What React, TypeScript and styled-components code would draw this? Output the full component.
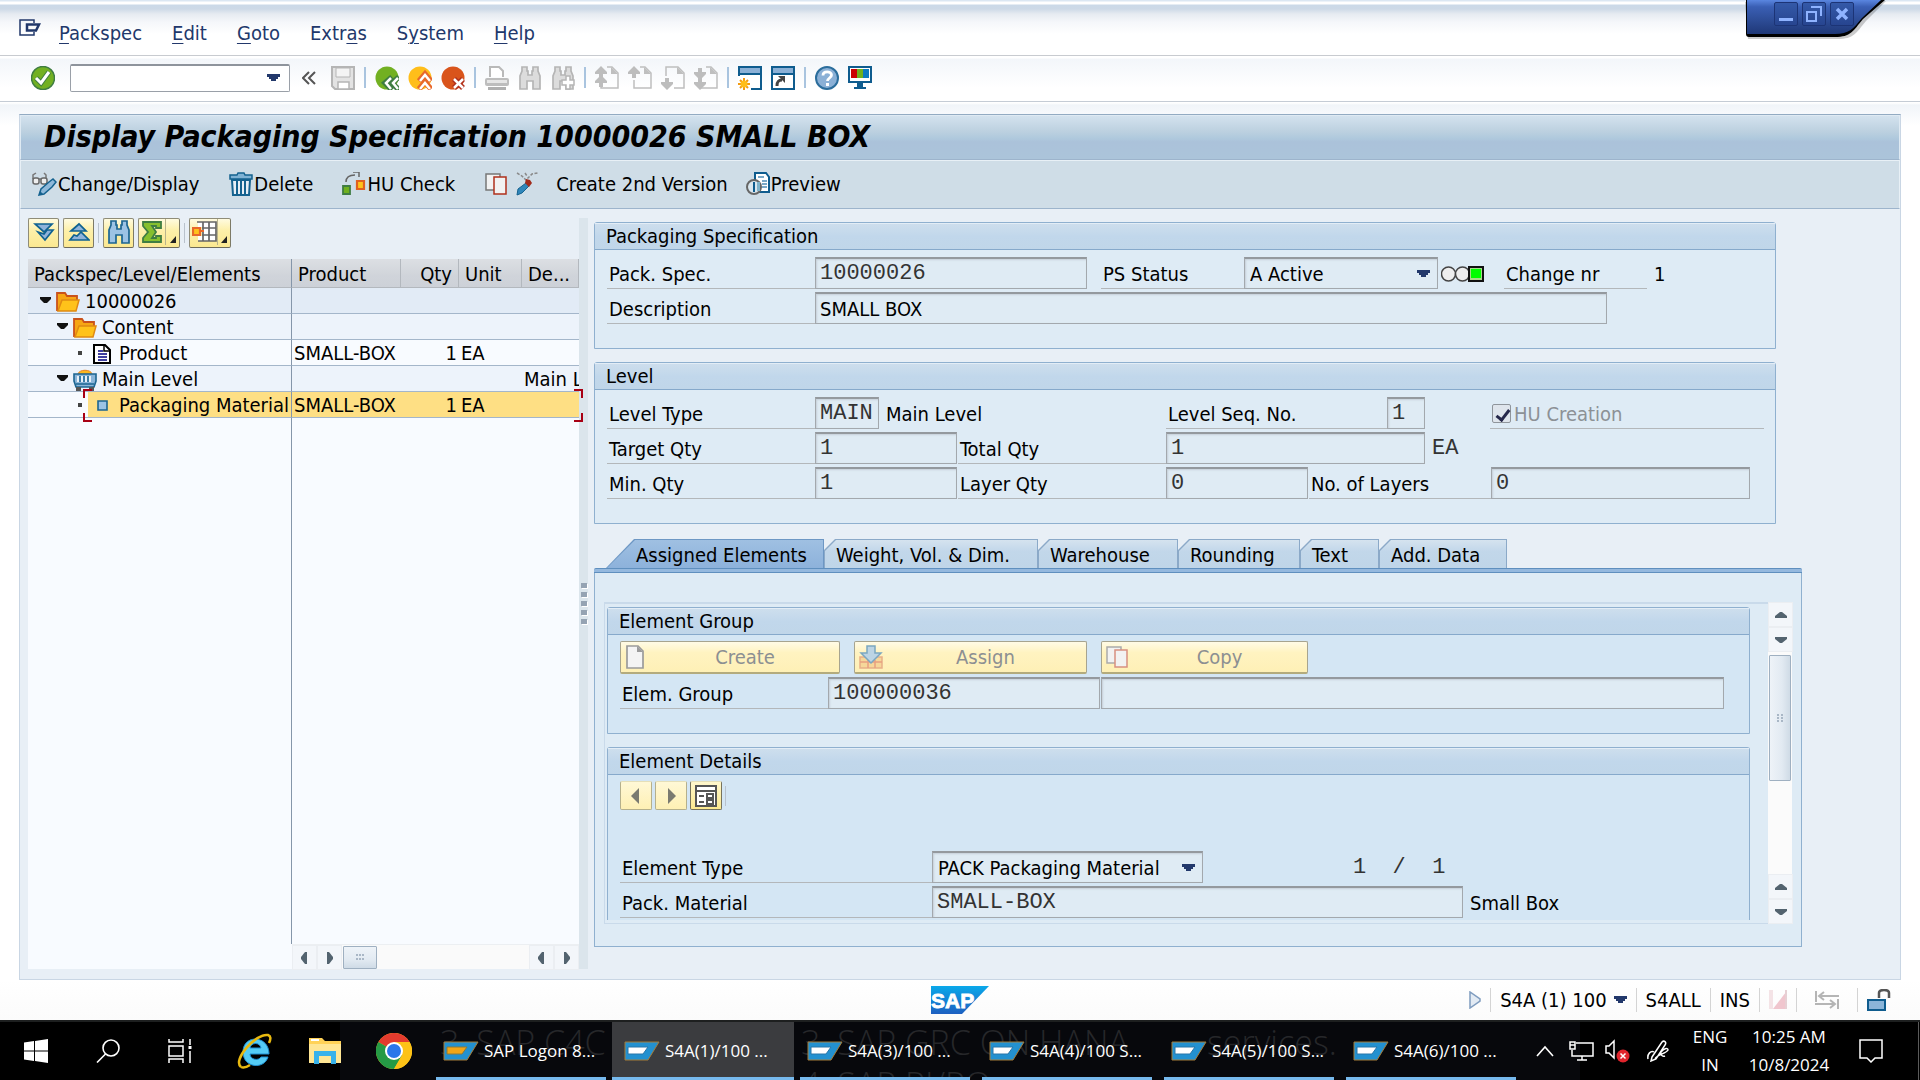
import React from 'react';
import styled, { createGlobalStyle, css } from 'styled-components';

const UI = `"DejaVu Sans Condensed", "DejaVu Sans", "Noto Sans", sans-serif`;
const MONO = `"Liberation Mono", monospace`;
const SEGOE = `"Open Sans", "Noto Sans", sans-serif`;

const GlobalStyle = createGlobalStyle`
  * { box-sizing: border-box; }
  body { margin: 0; background: #fff; font-family: ${UI}; font-size: 20px; line-height: 24px; color: #000; overflow: hidden; }
  button, input, select { font: inherit; color: inherit; margin: 0; padding: 0; border: 0; border-radius: 0; background: none; }
  svg { display: block; flex: none; }
  h1, h2 { margin: 0; font-weight: 400; font-size: inherit; }
`;

/* ---------- window ---------- */
const Window = styled.div`
  display: flex;
  flex-direction: column;
  min-height: 100vh;
  position: relative;
`;

const MenuBar = styled.nav`
  display: flex;
  align-items: center;
  height: 56px;
  padding: 10px 19px 0;
  border-bottom: 1px solid #c8cbd0;
  background: linear-gradient(#dbe7f3 0, #dbe7f3 1px, #fff 2px, #fff 4px, #cbd9e8 5px, #cdd9e7 9px, #e6ebf1 14px, #f5f7fa 22px, #fff 34px);
`;

const SystemMenu = styled.button`
  width: 22px;
  margin: 0 18px 10px 0;
`;

const MenuItem = styled.button`
  margin-right: 30px;
  color: #22386b;
  u { text-decoration-thickness: 1px; text-underline-offset: 3px; }
`;

const SystemBar = styled.div`
  display: flex;
  align-items: center;
  gap: 9px;
  height: 46px;
  padding: 0 31px 2px;
  border-bottom: 1px solid #c5ccd5;
  background: linear-gradient(#fff 2px, #f3f6fa 3px, #fff 32px);
`;

const Sep = styled.i`
  width: 2px;
  height: 21px;
  background: #a9c4df;
`;

const IconButton = styled.button`
  width: 24px;
  height: 26px;
  display: flex;
  align-items: center;
  justify-content: center;
`;

const HistoryButton = styled.button`
  width: 20px;
  height: 26px;
  display: flex;
  align-items: center;
`;

const Command = styled.div`
  display: flex;
  align-items: center;
  width: 220px;
  height: 28px;
  margin: 0 3px 0 6px;
  border: 1px solid #9aa0a8;
  border-top: 2px solid #8e949c;
  border-radius: 2px;
  background: #fff;
  padding-right: 9px;
  input { flex: 1; min-width: 0; height: 100%; outline: 0; padding-left: 6px; }
`;

const Canvas = styled.main`
  flex: 1;
  display: flex;
  flex-direction: column;
  padding: 12px 19px 0;
  background: linear-gradient(#fff 1px, #f1f5f9 3px, #fafbfd 16px, #fff 24px);
`;

const Frame = styled.section`
  flex: 1;
  display: flex;
  flex-direction: column;
  border: 1px solid #c9d6e4;
  border-top-color: #93abc2;
  background: #e8eff6;
`;

const TitleBar = styled.header`
  height: 45px;
  display: flex;
  align-items: center;
  padding: 0 0 2px 23px;
  border: 1px solid #dfeaf3;
  border-bottom: 1px solid #9db4cc;
  background: linear-gradient(#d3e2ee, #bdd1e0 35%, #afc9dd 52%, #abc2da 60%, #abc4da);
  h1 { font-size: 30px; line-height: 36px; font-weight: 700; font-style: italic; }
`;

const AppToolbar = styled.div`
  height: 49px;
  display: flex;
  align-items: center;
  padding: 0 0 2px 11px;
  border: 1px solid #e8f0f6;
  border-bottom: 1px solid #9db4cc;
  background: #cfdde7;
`;

const ToolButton = styled.button<{ $gap?: number }>`
  display: flex;
  align-items: center;
  gap: 1px;
  margin-right: ${(p) => p.$gap ?? 0}px;
  white-space: nowrap;
`;

const Workspace = styled.div`
  flex: 1;
  display: flex;
  padding: 9px 0 10px 8px;
`;

/* ---------- tree ---------- */
const TreePanel = styled.aside`
  width: 551px;
  flex: none;
  display: flex;
  flex-direction: column;
`;

const TreeTools = styled.div`
  display: flex;
  align-items: center;
  gap: 4px;
  height: 30px;
  margin-bottom: 11px;
`;

const goldFace = css`
  border: 1px solid #8f8c78;
  border-bottom-color: #6d6a58;
  border-right-color: #7d7a66;
  border-radius: 2px;
  background: linear-gradient(#fffbe0, #fdf0aa 40%, #fbe891);
`;

const GoldButton = styled.button<{ $wide?: boolean }>`
  ${goldFace}
  width: ${(p) => (p.$wide ? 42 : 31)}px;
  height: 30px;
  display: flex;
  align-items: center;
  justify-content: ${(p) => (p.$wide ? 'flex-start' : 'center')};
  padding: 0 0 2px ${(p) => (p.$wide ? 2 : 0)}px;
`;

const GoldCorner = styled.span`
  height: 26px;
  flex: 1;
  display: flex;
  align-items: flex-end;
  justify-content: center;
  padding-bottom: 2px;
  border-left: 1px solid #b9b48c;
`;

const ToolSep = styled.i`
  width: 1px;
  height: 20px;
  background: #b9c2cc;
`;

const TreeGrid = styled.div`
  flex: 1;
  display: flex;
  flex-direction: column;
  background: #f8fbff;
`;

const TreeTable = styled.table`
  width: 551px;
  table-layout: fixed;
  border-collapse: separate;
  border-spacing: 0;
  th {
    height: 29px;
    padding: 2px 6px 0;
    font-weight: 400;
    text-align: left;
    white-space: nowrap;
    border-right: 1px solid #b3b8be;
    border-bottom: 1px solid #b3b8be;
    background: linear-gradient(#dcdfe3, #d0d4da 60%, #cdd1d8);
  }
  th:nth-child(3) { text-align: right; }
  td {
    height: 26px;
    padding: 2px 2px 0;
    white-space: nowrap;
    overflow: hidden;
    border-bottom: 1px solid #a4b6ca;
    line-height: 23px;
  }
  td:nth-child(3) { text-align: right; }
  th:first-child, td:first-child { border-right: 1px solid #8596aa; padding-right: 0; }
  td:first-child { padding: 0; }
`;

const TreeRow = styled.tr<{ $tone: string }>`
  td { background: ${(p) => p.$tone}; }
`;

const Node = styled.div<{ $depth: number }>`
  display: flex;
  align-items: center;
  height: 25px;
  padding-top: 2px;
  margin-left: ${(p) => 12 + p.$depth * 17}px;
  gap: 5px;
`;

const Leaf = styled.div`
  display: flex;
  align-items: center;
  height: 25px;
  background: #f8fbff;
  > i { width: 4px; height: 4px; background: #444; margin: 0 6px 0 50px; flex: none; }
`;

const LeafBody = styled.span<{ $on?: boolean }>`
  flex: 1;
  display: flex;
  align-items: center;
  height: 25px;
  padding-top: 2px;
  background: ${(p) => (p.$on ? '#fedf84' : 'transparent')};
  svg { width: 18px; margin: 0 8px 0 5px; }
`;

const TreeFill = styled.div`
  flex: 1;
  width: 264px;
  border-right: 1px solid #8596aa;
`;

const HScroll = styled.div`
  display: flex;
  height: 25px;
  margin-left: 264px;
  border-top: 1px solid #eceff2;
  background: #fafafa;
`;

const ArrowButton = styled.button`
  width: 25px;
  height: 25px;
  flex: none;
  display: flex;
  align-items: center;
  justify-content: center;
  background: #f3f6fa;
  border: 1px solid #ebeef2;
`;

const Thumb = styled.div<{ $vertical?: boolean }>`
  display: grid;
  place-items: center;
  border: 1px solid #9fb0c1;
  border-radius: 1px;
  background: linear-gradient(${(p) => (p.$vertical ? '90deg' : '180deg')}, #eef3f8, #e2eaf2 60%, #cfdbe6);
  ${(p) => (p.$vertical ? css`height: 126px; margin: 3px 1px 0;` : css`width: 34px; margin: 1px 0 0 1px;`)}
`;

const Spacer = styled.div`
  flex: 1;
`;

const Corner = styled.i<{ $side: 'tl' | 'tr' | 'bl' | 'br' }>`
  position: absolute;
  width: 9px;
  height: 9px;
  ${(p) => (p.$side[0] === 't' ? 'top: -3px; border-top: 2px solid #a80014;' : 'bottom: -4px; border-bottom: 2px solid #a80014;')}
  ${(p) => (p.$side[1] === 'l' ? 'left: 55px; border-left: 2px solid #a80014;' : 'right: -4px; border-right: 2px solid #a80014;')}
`;

const TreeBody = styled.div`
  position: relative;
`;

const SelectionMark = styled.div`
  position: absolute;
  left: 0;
  right: 0;
  bottom: 0;
  height: 26px;
  pointer-events: none;
`;

const Splitter = styled.div`
  width: 9px;
  flex: none;
  display: flex;
  flex-direction: column;
  align-items: center;
  justify-content: center;
  gap: 4px;
  padding-top: 20px;
  margin-right: 6px;
  background: #dbe5ec;
  i { width: 6px; height: 5px; background: #95a3b3; box-shadow: 1px 1px 0 #fff; }
`;

/* ---------- form ---------- */
const Detail = styled.div`
  flex: 1;
  min-width: 0;
  padding-top: 4px;
`;

const Group = styled.section<{ $inner?: boolean; $open?: boolean }>`
  max-width: ${(p) => (p.$inner ? 1143 : 1182)}px;
  margin-bottom: 13px;
  border: 1px solid #8fb0cf;
  border-radius: 3px 3px 0 0;
  background: ${(p) => (p.$inner ? '#d4e6f4' : '#deebf5')};
  h2 {
    height: 27px;
    padding-left: 11px;
    line-height: 25px;
    border-top: 1px solid #e3edf6;
    border-bottom: 1px solid #86a9cb;
    background: linear-gradient(#cddeed, #c1d7eb 50%, #c0d6e9);
  }
  ${(p) => p.$open && css`margin-bottom: 0; border-bottom: 0;`}
`;

const GroupBody = styled.div<{ $open?: boolean }>`
  display: flex;
  flex-direction: column;
  gap: 3px;
  padding: 7px 12px ${(p) => (p.$open ? 2 : 24)}px;
`;

const Row = styled.div`
  display: flex;
  height: 32px;
  white-space: nowrap;
`;

const Label = styled.label<{ $w: number; $dim?: boolean }>`
  width: ${(p) => p.$w}px;
  flex: none;
  display: flex;
  align-items: center;
  padding: 2px 0 0 2px;
  border-bottom: 1px solid #b3b7ba;
  color: ${(p) => (p.$dim ? '#8c9196' : 'inherit')};
`;

const fieldFace = css`
  height: 32px;
  flex: none;
  border: 1px solid #a3a8ad;
  border-top: 2px solid #94999e;
  background: #dfebf4;
  box-shadow: inset 1px 1px 2px #c5cfd8;
`;

const monoText = css`
  font-family: ${MONO};
  font-size: 22px;
  color: #333;
`;

const Field = styled.input<{ $w: number; $mono?: boolean }>`
  ${fieldFace}
  width: ${(p) => p.$w}px;
  padding: 0 0 0 4px;
  outline: 0;
  ${(p) => p.$mono && monoText}
`;

const SelectBox = styled.div<{ $w: number }>`
  ${fieldFace}
  width: ${(p) => p.$w}px;
  display: grid;
  grid-template-columns: 1fr 20px;
  align-items: center;
  select { grid-area: 1 / 1 / 2 / 3; height: 100%; appearance: none; padding-left: 5px; outline: 0; }
  svg { grid-area: 1 / 2; pointer-events: none; }
`;

const Plain = styled.output<{ $w?: number; $mono?: boolean }>`
  width: ${(p) => (p.$w ? p.$w + 'px' : 'auto')};
  flex: none;
  display: flex;
  align-items: center;
  padding: 2px 0 0 7px;
  white-space: pre;
  ${(p) => p.$mono && monoText}
`;

const Gap = styled.span<{ $w: number }>`
  width: ${(p) => p.$w}px;
  flex: none;
`;

const Check = styled.input`
  appearance: none;
  width: 19px;
  height: 19px;
  margin-right: 3px;
  && { border: 1px solid #8f959b; border-radius: 2px; background: #dfe5ec; }
  position: relative;
  &:checked::after {
    content: '';
    position: absolute;
    left: 6px;
    top: 2px;
    width: 5px;
    height: 11px;
    border: solid #26284a;
    border-width: 0 3px 3px 0;
    transform: rotate(38deg);
  }
`;

const Lights = styled.span`
  display: flex;
  align-items: center;
  margin: 2px 20px 0 3px;
`;

/* ---------- tabs ---------- */
const TabList = styled.div`
  display: flex;
  padding-left: 12px;
  margin-top: 15px;
`;

const Tab = styled.button<{ $w: number; $active?: boolean }>`
  --cut: ${(p) => (p.$active ? 'polygon(28px 0, 100% 0, 100% 100%, 0 100%)' : 'polygon(11px 0, 100% 0, 100% 100%, 0 100%, 0 11px)')};
  position: relative;
  width: ${(p) => p.$w}px;
  height: 29px;
  padding: 2px 0 0 ${(p) => (p.$active ? 30 : 12)}px;
  text-align: left;
  white-space: nowrap;
  background: ${(p) => (p.$active ? '#6d97c4' : '#8ba9c8')};
  clip-path: var(--cut);
  isolation: isolate;
  &::before {
    content: '';
    position: absolute;
    inset: 1px 1px 0 1px;
    z-index: -1;
    clip-path: var(--cut);
    background: ${(p) => (p.$active ? 'linear-gradient(#9fc0e2, #8db2db)' : 'linear-gradient(#d5e3ef, #c2d7ea 40%, #bfd5e8)')};
  }
`;

const TabPanel = styled.div`
  max-width: 1208px;
  padding: 0 9px 22px;
  border: 1px solid #8fb0cf;
  border-top: 0;
  background: #deebf5;
`;

const TabEdge = styled.div`
  height: 5px;
  max-width: 1208px;
  border: solid #5f8fbe;
  border-width: 1px 0;
  border-radius: 2px 2px 0 0;
  background: #94b8de;
`;

const TabScroll = styled.div`
  display: flex;
  padding-top: 29px;
`;

const Sunken = styled.div`
  flex: 1;
  min-width: 0;
  border: solid #c9daea;
  border-width: 2px 0 1px 1px;
  padding: 3px 0 3px 2px;
`;

const VScroll = styled.div`
  width: 24px;
  display: flex;
  flex-direction: column;
  background: #fbfbfb;
`;

const Actions = styled.div`
  display: flex;
  gap: 14px;
  margin-top: -1px;
`;

const Action = styled.button<{ $w: number }>`
  && {
    width: ${(p) => p.$w}px;
    height: 33px;
    display: grid;
    grid-template-columns: 30px 1fr;
    align-items: center;
    border: 1px solid #a7a48f;
    border-bottom: 2px solid #b3ab7d;
    border-radius: 2px;
    background: linear-gradient(#fffbe6, #fff3c1 35%, #fef0b6);
    color: #8c8f92;
  }
  svg { margin-left: 4px; }
`;

const Pager = styled.div`
  display: flex;
  align-items: center;
  gap: 3px;
  margin: -1px 0 38px;
`;

const PageButton = styled.button<{ $strong?: boolean }>`
  width: 32px;
  height: 29px;
  display: grid;
  place-items: center;
  border: 1px solid ${(p) => (p.$strong ? '#77735c' : '#b5b08c')};
  border-top-color: #e5dfb8;
  border-radius: 2px;
  background: ${(p) => (p.$strong ? 'linear-gradient(#fff7cc, #fbe88f)' : 'linear-gradient(#fff8d6, #fef0b4)')};
`;

/* ---------- status bar ---------- */
const StatusBar = styled.footer`
  height: 40px;
  display: grid;
  grid-template-columns: 1fr auto 1fr;
  align-items: center;
  background: linear-gradient(#fff, #fbfbfb);
`;

const StatusRight = styled.div`
  display: flex;
  align-items: center;
  justify-content: flex-end;
  gap: 9px;
  padding-right: 29px;
  white-space: nowrap;
`;

const StatusSep = styled.i`
  width: 1px;
  height: 24px;
  background: #d4d4d4;
`;

const StatusButton = styled.button`
  display: flex;
  align-items: center;
  gap: 7px;
`;

/* ---------- taskbar ---------- */
const Taskbar = styled.div`
  position: relative;
  height: 60px;
  display: flex;
  align-items: stretch;
  overflow: hidden;
  border-top: 2px solid #1d1f1f;
  background: linear-gradient(90deg, #000 340px, #07080c 340px, #07080c calc(100% - 340px), #000 calc(100% - 340px));
  color: #fff;
  font-family: ${SEGOE};
  font-size: 17px;
`;

const Launch = styled.button<{ $w: number }>`
  width: ${(p) => p.$w}px;
  flex: none;
  display: grid;
  place-items: center;
`;

const Task = styled.button<{ $active?: boolean; $end?: number }>`
  && {
    position: relative;
    width: ${(p) => (p.$active ? 182 : 170)}px;
    flex: none;
    margin-right: ${(p) => p.$end ?? 12}px;
    display: flex;
    align-items: center;
    gap: 5px;
    padding: 3px 0 0 ${(p) => (p.$active ? 12 : 7)}px;
    white-space: nowrap;
    border-bottom: 3px solid #76b9ed;
    background: ${(p) => (p.$active ? '#3b3c3f' : 'transparent')};
  }
`;

const Ghost = styled.span<{ $x: number; $y: number }>`
  position: absolute;
  left: ${(p) => p.$x}px;
  top: ${(p) => p.$y}px;
  font-size: 34px;
  line-height: 40px;
  font-weight: 300;
  white-space: nowrap;
  color: #26272a;
`;

const Tray = styled.div`
  margin-left: auto;
  display: flex;
  align-items: center;
  padding-right: 7px;
  text-align: center;
  line-height: 28px;
  white-space: nowrap;
`;

const TrayText = styled.div<{ $w: number }>`
  width: ${(p) => p.$w}px;
`;

const DesktopEdge = styled.i`
  width: 1px;
  align-self: stretch;
  background: #5a5a5a;
`;

/* ---------- remote session handle ---------- */
const Session = styled.div`
  position: absolute;
  top: 0;
  right: 28px;
  width: 150px;
  height: 42px;
  > svg { position: absolute; inset: 0; }
`;

const SessionButtons = styled.div`
  position: absolute;
  left: 32px;
  top: 2px;
  display: flex;
  gap: 4px;
`;

const SessionButton = styled.button`
  && {
    width: 24px;
    height: 24px;
    display: grid;
    place-items: center;
    border: 1px solid #1c3476;
    border-radius: 2px;
    background: linear-gradient(#3459a8, #274590);
  }
`;

/* ---------- icons ---------- */
const Svg = ({ w = 24, h = 24, children, vb }: { w?: number; h?: number; vb?: string; children: React.ReactNode }) => (
  <svg width={w} height={h} viewBox={vb ?? `0 0 ${w} ${h}`} aria-hidden="true">{children}</svg>
);

const DropArrow = () => <Svg w={13} h={8}><path d="M0 0h13v3h-2v2H9v2H4V5H2V3H0z" fill="#22386b" /></Svg>;
const Tri = ({ dir }: { dir: 'l' | 'r' | 'u' | 'd' }) => {
  const d = { l: 'M9 1v12H7L3 8V6l4-5z', r: 'M4 1v12h2l4-5V6L6 1z', u: 'M1 10h12V8L8 4H6L1 8z', d: 'M1 4h12v2L8 10H6L1 6z' }[dir];
  return <Svg w={14} h={14}><path d={d} fill="#53636f" /></Svg>;
};
const Grip = ({ tall }: { tall?: boolean }) => (
  <Svg w={9} h={9}>
    {[0, 3, 6].map((a) => [0, 4].map((b) => <rect key={`${a}${b}`} x={tall ? b + 1 : a} y={tall ? a : b + 1} width="2" height="2" fill="#a9b7c6" />))}
  </Svg>
);
const SysIcon = () => (
  <Svg w={22} h={17}><path d="M15 4V1H1v15h14v-3" fill="none" stroke="#22386b" strokeWidth="1.500" /><path d="M8 5.500h12l-3 6H8z" fill="none" stroke="#22386b" strokeWidth="2.500" /></Svg>
);
const OkIcon = () => (
  <Svg><circle cx="12" cy="12" r="11.500" fill="#72b022" stroke="#3f7d42" strokeWidth="1.500" /><path d="M5 12l5 5 8-11" fill="none" stroke="#3f7d42" strokeWidth="5" /><path d="M5 12l5 5 8-11" fill="none" stroke="#fff" strokeWidth="3" /></Svg>
);
const Collapse = () => <Svg w={14} h={14}><path d="M7 1L1 7l6 6M13 1L7 7l6 6" fill="none" stroke="#555" strokeWidth="2" /></Svg>;
const SaveIcon = () => (
  <Svg><path d="M1 1h22v22H4l-3-3z" fill="#e3e3e3" stroke="#b5b5b5" strokeWidth="2" /><path d="M5 2h14v9H5z" fill="#f4f4f4" stroke="#b5b5b5" /><path d="M7 16h11v7H7z" fill="#fff" stroke="#b5b5b5" strokeWidth="1.500" /></Svg>
);
const Round = ({ fill, edge, kind }: { fill: string; edge: string; kind: 'back' | 'up' | 'x' }) => (
  <Svg>
    <circle cx="12" cy="12" r="11.500" fill={fill} />
    <path d={kind === 'back' ? 'M17 11l-7 6 7 7M24 11l-7 6 7 7' : kind === 'up' ? 'M11 15l6-7 6 7M11 23l6-7 6 7' : 'M13 13l9 9M22 13l-9 9'} fill="none" stroke={edge} strokeWidth="5.500" />
    <path d={kind === 'back' ? 'M16 12l-5 5 5 6M23 12l-5 5 5 6' : kind === 'up' ? 'M12 15l5-6 5 6M12 23l5-6 5 6' : 'M13 13l9 9M22 13l-9 9'} fill="none" stroke="#fff" strokeWidth="2.500" />
  </Svg>
);
const Printer = () => (
  <Svg><path d="M5 11V1h9l4 4v6" fill="#fff" stroke="#b9b9b9" strokeWidth="2" /><rect x="0" y="12" width="24" height="8" rx="2" fill="#bdbdbd" /><rect x="2" y="14" width="20" height="3" fill="#e6e6e6" /><rect x="3" y="21" width="18" height="3" fill="#b0b0b0" /></Svg>
);
const Binoc = ({ fill = '#dcdcdc', line = '#b5b5b5', plus }: { fill?: string; line?: string; plus?: boolean }) => (
  <Svg>
    <path d="M4 1h5v4h1v4h4V5h1V1h5v4l2 5v13h-7V15H9v8H2V10l2-5z" fill={fill} stroke={line} strokeWidth="1.700" />
    {plus && <path d="M15 10h4v4h4v5h-4v4h-4v-4h-4v-5h4z" fill="#fff" stroke={line} strokeWidth="1.500" />}
  </Svg>
);
const PageNav = ({ kind }: { kind: 'first' | 'prev' | 'next' | 'last' }) => {
  const up = 'M6 0l6 6v2H8v4H4V8H0V6z';
  const down = 'M6 24l6-6v-2H8v-4H4v4H0v2z';
  return (
    <Svg>
      <path d={kind === 'next' ? 'M5 10V1h12l6 6v15H13' : 'M12 1h5l6 6v15H6v-8'} fill="none" stroke="#bfbfbf" strokeWidth="1.500" />
      <path d="M16 1v7h7z" fill="#bfbfbf" />
      {kind === 'prev' && <path d={up} fill="#bdbdbd" />}
      {kind === 'next' && <path d={down} fill="#bdbdbd" />}
      {kind === 'first' && <><path d={up} fill="#bdbdbd" /><path d={up} transform="translate(0 9)" fill="#bdbdbd" /></>}
      {kind === 'last' && <><path d={down} fill="#bdbdbd" /><path d={down} transform="translate(0 -10)" fill="#bdbdbd" /></>}
    </Svg>
  );
};
const WinIcon = ({ kind }: { kind: 'new' | 'link' }) => (
  <Svg>
    <path d="M1 1h22v22H1z" fill="#fff" stroke="#0f5c8e" strokeWidth="2" /><path d="M2 2h20v5H2z" fill="#8bb0d6" /><path d="M1 8h22" stroke="#0f5c8e" strokeWidth="2" />
    {kind === 'new' ? <><path d="M0 10h13v14H0z" fill="#fff" /><path d="M6 12v12M0 18h12M2 14l8 8M10 14l-8 8" stroke="#f29a10" strokeWidth="2" /><circle cx="6" cy="18" r="3.500" fill="#ffbe1a" /></>
      : <><path d="M6 20c0-4 1-6 5-6" fill="none" stroke="#444" strokeWidth="3" /><path d="M7 10h7v7z" fill="#444" /></>}
  </Svg>
);
const HelpIcon = () => (
  <Svg><circle cx="12" cy="12" r="11" fill="#8bb0d6" stroke="#2b6d9c" strokeWidth="2" /><path d="M8 9.500C8 4.500 16.500 5 16.500 9c0 3-4 3-4 6" fill="none" stroke="#fff" strokeWidth="2.800" /><rect x="11" y="17" width="3" height="3" fill="#fff" /></Svg>
);
const Monitor = () => (
  <Svg><path d="M1 1h22v15H1z" fill="#fff" stroke="#0f5c8e" strokeWidth="2" /><path d="M3 3h6v9H3z" fill="#c00" /><path d="M9 3h6v9H9z" fill="#6fb01e" /><path d="M15 3h6v9h-6z" fill="#0b79c1" /><path d="M9 17h6v4h3v2H6v-2h3z" fill="#0f5c8e" /></Svg>
);
const Glasses = () => (
  <Svg w={25}>
    <path d="M1 7V3l3-2M14 6V3l-2-2M6 7h3" fill="none" stroke="#777" strokeWidth="1.500" />
    <rect x="1" y="6" width="6" height="6" rx="2" fill="#eee" stroke="#666" strokeWidth="1.500" /><rect x="9" y="6" width="6" height="6" rx="2" fill="#eee" stroke="#666" strokeWidth="1.500" />
    <path d="M7 23l2-6 8-7 4-3 3 3-4 5-8 7z" fill="#8fb9da" stroke="#15628f" strokeWidth="1.500" /><path d="M7 23l1-4 3 3z" fill="#15628f" />
  </Svg>
);
const Trash = () => (
  <Svg><path d="M8 3l1-2h6l1 2h7v4H1V3z" fill="#7fb2d4" stroke="#15628f" strokeWidth="1.500" /><path d="M3 8h18l-1 15H4z" fill="#e8eff6" stroke="#15628f" strokeWidth="2" /><path d="M8 9v13M12 9v13M16 9v13" stroke="#15628f" strokeWidth="2" /></Svg>
);
const HuIcon = () => (
  <Svg><path d="M4 10C4 5 8 3 13 3M11 0h6v5" fill="none" stroke="#666" strokeWidth="1.500" /><path d="M1 14h7v8H1z" fill="#6fb01e" stroke="#3f7d42" strokeWidth="1.800" /><path d="M15 9h7v8h-7z" fill="#ffc21a" stroke="#e0601f" strokeWidth="2.200" /></Svg>
);
const CopyIcon = ({ dim }: { dim?: boolean }) => (
  <Svg w={22}><path d="M1 2h14v16H1z" fill="#f2f2f2" stroke={dim ? '#aaa' : '#777'} strokeWidth="1.500" /><path d="M9 5h12v17H9z" fill="#f2f2f2" stroke={dim ? '#d89080' : '#b0301c'} strokeWidth="1.500" /></Svg>
);
const Wand = () => (
  <Svg><path d="M2 1l5 3 4 4 6-6 6-1M10 1l2 3" fill="none" stroke="#8a8a8a" strokeWidth="1.500" strokeDasharray="3 1.500" /><path d="M2 23l1-6 8-6 3 3-7 7z" fill="#2f86ba" stroke="#15628f" /><path d="M11 7l4 1 2 3-3 4-4-4z" fill="#a02b1c" /></Svg>
);
const PreviewIcon = () => (
  <Svg><path d="M9 1h11l3 4v15H9z" fill="#fff" stroke="#0f5c8e" strokeWidth="2" /><path d="M16 9h5M16 12h5M16 15h5M12 5h6" stroke="#4f8cb5" strokeWidth="1.500" /><circle cx="8" cy="15" r="7" fill="#d9e6ee" stroke="#666" strokeWidth="2" /><path d="M8 10v10" stroke="#0f5c8e" strokeWidth="2" /><path d="M11 10h3v9h-3z" fill="#7fb2c9" /></Svg>
);
const ExpandIcon = ({ up }: { up?: boolean }) => (
  <Svg w={22} h={20}>
    <g fill="#8fb3da" stroke="#0f6291" strokeWidth="1.700">
      {up ? <><path d="M3 9h15l-7-7z" /><path d="M2 18h19l-8-8-4 4-3-1z" /></> : <><path d="M2 2h17l-8 8z" /><path d="M5 10l6 2 3-4h6l-8 10z" /></>}
    </g>
  </Svg>
);
const CornerMark = () => <Svg w={6} h={7}><path d="M6 0v7H0z" fill="#222" /></Svg>;
const SigmaIcon = () => (
  <Svg w={24} h={22}><path d="M2 1h18v6h-5V5h-4l4 6-4 6h4v-2h5v6H2v-4l5-6-5-6z" fill="#86bf2e" stroke="#3f7d42" strokeWidth="1.800" /></Svg>
);
const GridIcon = () => (
  <Svg w={25} h={22}><path d="M6 1h18v19H6z" fill="#fff" /><path d="M5 1h19v19H6M11 1v19M17 1v19M9 7h15M9 14h15" fill="none" stroke="#666" strokeWidth="1.700" /><path d="M0 6h10v9H0z" fill="#fdf0aa" /><path d="M1 7h7v7H1z" fill="#ffc21a" stroke="#e8682a" strokeWidth="2.200" /><path d="M9 10h3" stroke="#e8682a" strokeWidth="2" /></Svg>
);
const Folder = () => (
  <Svg h={20}><path d="M1 19V1h8l2 3h10v4" fill="#f7a614" stroke="#c9521b" strokeWidth="1.800" /><path d="M2 19L6 8h17l-3 11z" fill="#ffc21a" stroke="#e08a12" strokeWidth="1.500" /></Svg>
);
const DocIcon = () => (
  <Svg w={18} h={20}><path d="M1 1h11l5 5v13H1z" fill="#fff" stroke="#000" strokeWidth="2" /><path d="M11 1v6h6" fill="none" stroke="#000" strokeWidth="1.500" /><path d="M5 7h5M5 10h9M5 13h9M5 16h9" stroke="#000080" strokeWidth="1.700" /></Svg>
);
const Truck = () => (
  <Svg h={22}><path d="M5 5c1-5 13-5 14 0z" fill="#ffb81c" stroke="#e8862a" /><path d="M1 5h22v7l-2 6H3l-2-6z" fill="#8bb5d9" stroke="#1c6591" strokeWidth="1.600" /><path d="M5 7v6M9 7v6M13 7v6M17 7v6" stroke="#fff" strokeWidth="1.600" /><path d="M7 7v6M11 7v6M15 7v6M3 15h18" stroke="#1c6591" strokeWidth="1.400" /><path d="M3 18h5v4H3zM16 18h5v4h-5z" fill="#555" /></Svg>
);
const Square = () => <Svg w={18} h={12}><path d="M5 1h9v9H5z" fill="#9cc3e4" stroke="#1c6591" strokeWidth="1.600" /></Svg>;
const Twist = () => <Svg w={11} h={10}><path d="M0 0h11v2L7 6H4L0 2z" fill="#111" /></Svg>;
const LightIcons = () => (
  <Svg w={43} h={18}><circle cx="7.500" cy="9" r="7" fill="#eee" stroke="#444" strokeWidth="1.500" /><circle cx="21.500" cy="9" r="7" fill="#eee" stroke="#444" strokeWidth="1.500" /><path d="M28 2h14v14H28z" fill="#a9d98b" stroke="#111" strokeWidth="2" /><path d="M30 4h10v9H30z" fill="#0f0" /></Svg>
);
const PageIcon = () => <Svg w={20}><path d="M2 1h11l5 5v17H2z" fill="#f4f4f4" stroke="#9b9b9b" strokeWidth="1.700" /><path d="M12 1v6h6z" fill="#9b9b9b" /></Svg>;
const AssignIcon = () => <Svg><path d="M1 12h22v11H1z" fill="#f6d79a" stroke="#e8b088" strokeWidth="1.500" /><path d="M9 15v8M16 15v8M1 17h22" stroke="#e8a080" strokeWidth="1.500" /><path d="M8 1h8v7h6l-10 10L2 8h6z" fill="#bcd4e4" stroke="#7ba7c0" strokeWidth="1.500" /></Svg>;
const FormIcon = () => <Svg w={22} h={22}><path d="M1 1h20v20H1z" fill="#fff" stroke="#555" strokeWidth="2" /><path d="M1 6h20M4 11h5M4 17h5" stroke="#555" strokeWidth="2" /><path d="M12 9h6v4h-6zM12 15h6v4h-6z" fill="#fff" stroke="#555" strokeWidth="2" /></Svg>;
const Nav = ({ right }: { right?: boolean }) => <Svg w={12} h={18}><path d={right ? 'M3 1v16l8-8z' : 'M9 1v16L1 9z'} fill="#7a7a70" /></Svg>;

const SapLogo = () => (
  <svg width="58" height="28" viewBox="0 0 58 28" role="img" aria-label="SAP">
    <defs><linearGradient id="sap" x1="0" y1="0" x2="0" y2="1"><stop offset="0" stopColor="#0aa9ea" /><stop offset="1" stopColor="#1d5fc0" /></linearGradient></defs>
    <path d="M0 0h58L31 28H0z" fill="url(#sap)" />
    <text x="0" y="22" fontFamily="Liberation Sans, sans-serif" fontWeight="700" fontSize="21" fill="#fff" stroke="#fff" strokeWidth="0.800">SAP</text>
  </svg>
);
const PlayIcon = () => <Svg w={12} h={18}><path d="M1 1v16l10-7V8z" fill="#e2eaf3" stroke="#7f9cbf" strokeWidth="1.500" /></Svg>;
const Bars = () => <Svg w={18} h={20}><path d="M0 0h4v19H0z" fill="#f4e3e6" /><path d="M4 19L17 2v17z" fill="#f0c6ce" /><path d="M17 0v19" stroke="#e6d0d4" strokeWidth="2" /></Svg>;
const Swap = () => <Svg w={24} h={18}><path d="M1 0v11M23 8v10M4 5h20M0 13h20M9 1L4 5l5 4M15 9l5 4-5 4" fill="none" stroke="#b5b5b5" strokeWidth="2" /></Svg>;
const Lock = () => <Svg w={24} h={22}><path d="M1 11h17v10H1z" fill="#8bb5d9" stroke="#0f5c8e" strokeWidth="2" /><path d="M12 9V4c0-4 10-4 10 0v5" fill="none" stroke="#555" strokeWidth="2.500" /></Svg>;

const WinLogo = () => <Svg><path d="M0 3.500L10 2v9.500H0zM11 1.900L24 0v11.500H11zM0 12.500h10V22L0 20.500zM11 12.500h13V24l-13-1.900z" fill="#fff" /></Svg>;
const Search = () => <Svg><circle cx="15" cy="9" r="8" fill="none" stroke="#fff" strokeWidth="1.600" /><path d="M9.500 15L1 23.500" stroke="#fff" strokeWidth="1.600" /></Svg>;
const TaskView = () => <Svg><path d="M1 0v3h14V0M1 24v-4h14v4M1 7h14v10H1zM22 0v6M22 12v12" fill="none" stroke="#fff" strokeWidth="1.500" /><path d="M20.500 7h3v3h-3z" fill="#fff" /></Svg>;
const IeIcon = () => (
  <Svg w={36} h={36}>
    <path d="M33 21H14c0 6 9 7 11 3h7c-4 13-25 11-25-5 0-18 26-17 26 2zM14 15h11c-1-6-10-6-11 0z" fill="#55ccf5" stroke="#1f8fd0" strokeWidth="1" />
    <path d="M5 34C-4 27 20 0 32 2c3 1 3 4 1 8" fill="none" stroke="#e9b90f" strokeWidth="2.500" /><path d="M5 34c2 1 6 0 9-2" fill="none" stroke="#e9b90f" strokeWidth="2.500" />
  </Svg>
);
const Explorer = () => <Svg w={32} h={28}><path d="M0 1h13l3 3h16v22H0z" fill="#ffd257" /><path d="M0 7h32v19H0z" fill="#ffe694" /><path d="M2 2h8v2H2z" fill="#fff" /><path d="M5 27V14h22v13h-5v-8H10v8z" fill="#38b2ea" /></Svg>;
const Chrome = () => (
  <Svg w={36} h={36}>
    <circle cx="18" cy="18" r="18" fill="#fdc217" />
    <path d="M18 18L2.400 9A18 18 0 0 1 33.600 9z" fill="#e33b2e" /><path d="M18 18L2.400 9A18 18 0 0 0 18 36l8-13.500z" fill="#259a45" /><path d="M18 9h15.600L18 18z" fill="#e33b2e" /><path d="M18 36a18 18 0 0 0 15.600-27H18l7.800 13.500z" fill="#fdc217" />
    <circle cx="18" cy="18" r="9" fill="#fff" /><circle cx="18" cy="18" r="7" fill="#2b77ea" />
  </Svg>
);
const SapTask = ({ logon }: { logon?: boolean }) => (
  <Svg w={36} h={20}><path d="M1 1h34L24 19H1z" fill="#2391d0" stroke="#a57c38" strokeWidth="1" /><path d="M4 6h20l-5 7H4z" fill={logon ? '#f2a516' : '#fff'} stroke={logon ? '#8b7a3a' : '#2a76a8'} strokeWidth="1" /></Svg>
);
const Up = () => <Svg w={18} h={12}><path d="M1 11l8-9 8 9" fill="none" stroke="#fff" strokeWidth="1.600" /></Svg>;
const Net = () => <Svg w={25} h={20}><path d="M7 2h17v13H3V9M8 19h10M13 15v4M1 1h5v7H1zM1 4h5" fill="none" stroke="#fff" strokeWidth="1.500" /></Svg>;
const Mute = () => <Svg w={26} h={24}><path d="M1 7h3l5-5v17l-5-5H1z" fill="none" stroke="#fff" strokeWidth="1.500" /><circle cx="18" cy="17" r="6.500" fill="#e0242c" /><path d="M15.500 14.500l5 5M20.500 14.500l-5 5" stroke="#fff" strokeWidth="1.500" /></Svg>;
const Pen = () => <Svg w={22} h={22}><path d="M5 17L15 2c2-2 5 0 3 3L9 19l-5 2zM1 19c-1-5 3-9 6-7M8 19c2-5 11-5 13-9 0-3-5-1-7 2-1 3 2 5 4 4" fill="none" stroke="#fff" strokeWidth="1.500" /></Svg>;
const Notif = () => <Svg w={24} h={24}><path d="M1 1h22v18h-7l-4 4-4-4H1z" fill="none" stroke="#fff" strokeWidth="1.500" /></Svg>;

const menus: [string, string, string][] = [['', 'P', 'ackspec'], ['', 'E', 'dit'], ['', 'G', 'oto'], ['Extr', 'a', 's'], ['S', 'y', 'stem'], ['', 'H', 'elp']];
const tabs: [string, number][] = [['Assigned Elements', 218], ['Weight, Vol. & Dim.', 214], ['Warehouse', 140], ['Rounding', 122], ['Text', 79], ['Add. Data', 128]];
const Tool = ({ name, children }: { name: string; children: React.ReactNode }) => <IconButton aria-label={name}>{children}</IconButton>;

export default function App() {
  return (
    <Window>
      <GlobalStyle />
      <MenuBar>
        <SystemMenu aria-label="Menu"><SysIcon /></SystemMenu>
        {menus.map(([a, b, c]) => <MenuItem key={c}>{a}<u>{b}</u>{c}</MenuItem>)}
      </MenuBar>

      <SystemBar>
        <Tool name="Enter"><OkIcon /></Tool>
        <Command><input aria-label="Command" /><DropArrow /></Command>
        <HistoryButton aria-label="Hide command field"><Collapse /></HistoryButton>
        <Tool name="Save"><SaveIcon /></Tool>
        <Sep />
        <Tool name="Back"><Round fill="#72b022" edge="#3f7d42" kind="back" /></Tool>
        <Tool name="Exit"><Round fill="#ffbe1a" edge="#e8682a" kind="up" /></Tool>
        <Tool name="Cancel"><Round fill="#d9541b" edge="#b0301c" kind="x" /></Tool>
        <Sep />
        <Tool name="Print"><Printer /></Tool>
        <Tool name="Find"><Binoc /></Tool>
        <Tool name="Find next"><Binoc plus /></Tool>
        <Sep />
        <Tool name="First page"><PageNav kind="first" /></Tool>
        <Tool name="Previous page"><PageNav kind="prev" /></Tool>
        <Tool name="Next page"><PageNav kind="next" /></Tool>
        <Tool name="Last page"><PageNav kind="last" /></Tool>
        <Sep />
        <Tool name="New session"><WinIcon kind="new" /></Tool>
        <Tool name="Create shortcut"><WinIcon kind="link" /></Tool>
        <Sep />
        <Tool name="Help"><HelpIcon /></Tool>
        <Tool name="Customize layout"><Monitor /></Tool>
      </SystemBar>

      <Canvas>
        <Frame>
          <TitleBar><h1>Display Packaging Specification 10000026 SMALL BOX</h1></TitleBar>
          <AppToolbar>
            <ToolButton $gap={30}><Glasses />Change/Display</ToolButton>
            <ToolButton $gap={29}><Trash />Delete</ToolButton>
            <ToolButton $gap={30}><HuIcon />HU Check</ToolButton>
            <ToolButton $gap={8} aria-label="Copy"><CopyIcon /></ToolButton>
            <ToolButton $gap={17} aria-label="Check"><Wand /></ToolButton>
            <ToolButton $gap={18}>Create 2nd Version</ToolButton>
            <ToolButton><PreviewIcon />Preview</ToolButton>
          </AppToolbar>

          <Workspace>
            <TreePanel>
              <TreeTools>
                <GoldButton aria-label="Expand"><ExpandIcon /></GoldButton>
                <GoldButton aria-label="Collapse"><ExpandIcon up /></GoldButton>
                <ToolSep />
                <GoldButton aria-label="Find"><Binoc fill="#9cc3e4" line="#1c6591" /></GoldButton>
                <GoldButton $wide aria-label="Total"><SigmaIcon /><GoldCorner><CornerMark /></GoldCorner></GoldButton>
                <ToolSep />
                <GoldButton $wide aria-label="Layout"><GridIcon /><GoldCorner><CornerMark /></GoldCorner></GoldButton>
              </TreeTools>
              <TreeGrid>
                <TreeBody>
                  <TreeTable>
                    <colgroup><col width={264} /><col width={109} /><col width={58} /><col width={63} /><col width={57} /></colgroup>
                    <thead><tr><th>Packspec/Level/Elements</th><th>Product</th><th>Qty</th><th>Unit</th><th>De...</th></tr></thead>
                    <tbody>
                      <TreeRow $tone="#e2ebf6"><td><Node $depth={0}><Twist /><Folder />10000026</Node></td><td /><td /><td /><td /></TreeRow>
                      <TreeRow $tone="#edf3fb"><td><Node $depth={1}><Twist /><Folder />Content</Node></td><td /><td /><td /><td /></TreeRow>
                      <TreeRow $tone="#f8fbff"><td><Leaf><i /><LeafBody><DocIcon />Product</LeafBody></Leaf></td><td>SMALL-BOX</td><td>1</td><td>EA</td><td /></TreeRow>
                      <TreeRow $tone="#edf3fb"><td><Node $depth={1}><Twist /><Truck />Main Level</Node></td><td /><td /><td /><td>Main L</td></TreeRow>
                      <TreeRow $tone="#fedf84"><td><Leaf><i /><LeafBody $on><Square />Packaging Material</LeafBody></Leaf></td><td>SMALL-BOX</td><td>1</td><td>EA</td><td /></TreeRow>
                    </tbody>
                  </TreeTable>
                  <SelectionMark><Corner $side="tl" /><Corner $side="bl" /><Corner $side="tr" /><Corner $side="br" /></SelectionMark>
                </TreeBody>
                <TreeFill />
                <HScroll>
                  <ArrowButton aria-label="Scroll left"><Tri dir="l" /></ArrowButton>
                  <ArrowButton aria-label="Scroll right"><Tri dir="r" /></ArrowButton>
                  <Thumb><Grip /></Thumb>
                  <Spacer />
                  <ArrowButton aria-label="Scroll left"><Tri dir="l" /></ArrowButton>
                  <ArrowButton aria-label="Scroll right"><Tri dir="r" /></ArrowButton>
                </HScroll>
              </TreeGrid>
            </TreePanel>

            <Splitter><i /><i /><i /><i /><i /></Splitter>

            <Detail>
              <Group>
                <h2>Packaging Specification</h2>
                <GroupBody>
                  <Row>
                    <Label $w={208} htmlFor="spec">Pack. Spec.</Label>
                    <Field $w={272} $mono id="spec" readOnly value="10000026" />
                    <Gap $w={14} />
                    <Label $w={143} htmlFor="status">PS Status</Label>
                    <SelectBox $w={194}><select id="status"><option>A Active</option></select><DropArrow /></SelectBox>
                    <Lights><LightIcons /></Lights>
                    <Label as="span" $w={143}>Change nr</Label>
                    <Plain>1</Plain>
                  </Row>
                  <Row>
                    <Label $w={208} htmlFor="desc">Description</Label>
                    <Field $w={792} id="desc" readOnly value="SMALL BOX" />
                  </Row>
                </GroupBody>
              </Group>

              <Group>
                <h2>Level</h2>
                <GroupBody>
                  <Row>
                    <Label $w={208} htmlFor="ltype">Level Type</Label>
                    <Field $w={64} $mono id="ltype" readOnly value="MAIN" />
                    <Plain $w={287}>Main Level</Plain>
                    <Label $w={221} htmlFor="seq">Level Seq. No.</Label>
                    <Field $w={38} $mono id="seq" readOnly value="1" />
                    <Gap $w={65} />
                    <Label $w={274} $dim><Check type="checkbox" defaultChecked disabled />HU Creation</Label>
                  </Row>
                  <Row>
                    <Label $w={208} htmlFor="target">Target Qty</Label>
                    <Field $w={142} $mono id="target" readOnly value="1" />
                    <Gap $w={1} />
                    <Label $w={208} htmlFor="total">Total Qty</Label>
                    <Field $w={259} $mono id="total" readOnly value="1" />
                    <Plain $mono>EA</Plain>
                  </Row>
                  <Row>
                    <Label $w={208} htmlFor="min">Min. Qty</Label>
                    <Field $w={142} $mono id="min" readOnly value="1" />
                    <Gap $w={1} />
                    <Label $w={208} htmlFor="layer">Layer Qty</Label>
                    <Field $w={142} $mono id="layer" readOnly value="0" />
                    <Gap $w={1} />
                    <Label $w={182} htmlFor="layers">No. of Layers</Label>
                    <Field $w={259} $mono id="layers" readOnly value="0" />
                  </Row>
                </GroupBody>
              </Group>

              <TabList role="tablist">
                {tabs.map(([t, w], i) => <Tab key={t} $w={w} $active={i === 0} role="tab" aria-selected={i === 0}>{t}</Tab>)}
              </TabList>
              <TabEdge />
              <TabPanel role="tabpanel">
                <TabScroll>
                  <Sunken>
                    <Group $inner>
                      <h2>Element Group</h2>
                      <GroupBody>
                        <Actions>
                          <Action $w={220}><PageIcon />Create</Action>
                          <Action $w={233}><AssignIcon />Assign</Action>
                          <Action $w={207}><CopyIcon dim />Copy</Action>
                        </Actions>
                        <Row>
                          <Label $w={208} htmlFor="eg">Elem. Group</Label>
                          <Field $w={272} $mono id="eg" readOnly value="100000036" />
                          <Gap $w={1} />
                          <Field $w={623} aria-label="Element group text" readOnly value="" />
                        </Row>
                      </GroupBody>
                    </Group>
                    <Group $inner $open>
                      <h2>Element Details</h2>
                      <GroupBody $open>
                        <Pager>
                          <PageButton aria-label="Previous"><Nav /></PageButton>
                          <PageButton aria-label="Next"><Nav right /></PageButton>
                          <PageButton $strong aria-label="Details"><FormIcon /></PageButton>
                          <ToolSep />
                        </Pager>
                        <Row>
                          <Label $w={312} htmlFor="etype">Element Type</Label>
                          <SelectBox $w={271}><select id="etype"><option>PACK Packaging Material</option></select><DropArrow /></SelectBox>
                          <Gap $w={143} />
                          <Plain $mono>{'1  /  1'}</Plain>
                        </Row>
                        <Row>
                          <Label $w={312} htmlFor="mat">Pack. Material</Label>
                          <Field $w={531} $mono id="mat" readOnly value="SMALL-BOX" />
                          <Plain>Small Box</Plain>
                        </Row>
                      </GroupBody>
                    </Group>
                  </Sunken>
                  <VScroll>
                    <ArrowButton aria-label="Scroll up"><Tri dir="u" /></ArrowButton>
                    <ArrowButton aria-label="Scroll down"><Tri dir="d" /></ArrowButton>
                    <Thumb $vertical><Grip tall /></Thumb>
                    <Spacer />
                    <ArrowButton aria-label="Scroll up"><Tri dir="u" /></ArrowButton>
                    <ArrowButton aria-label="Scroll down"><Tri dir="d" /></ArrowButton>
                  </VScroll>
                </TabScroll>
              </TabPanel>
            </Detail>
          </Workspace>
        </Frame>
      </Canvas>

      <StatusBar>
        <span />
        <SapLogo />
        <StatusRight>
          <PlayIcon />
          <StatusSep />
          <StatusButton>S4A (1) 100<DropArrow /></StatusButton>
          <StatusSep />
          <span>S4ALL</span>
          <StatusSep />
          <span>INS</span>
          <StatusSep />
          <Bars />
          <StatusSep />
          <Gap $w={0} /><Swap /><Gap $w={0} />
          <StatusSep />
          <Lock />
        </StatusRight>
      </StatusBar>

      <Taskbar>
        <Ghost $x={440} $y={0} aria-hidden>3. SAP C4C</Ghost>
        <Ghost $x={801} $y={0} aria-hidden>3. SAP GRC ON HANA</Ghost>
        <Ghost $x={1207} $y={0} aria-hidden>services.</Ghost>
        <Ghost $x={801} $y={42} aria-hidden>4. SAP PI/PO</Ghost>
        <Launch $w={72} aria-label="Start"><WinLogo /></Launch>
        <Launch $w={72} aria-label="Search"><Search /></Launch>
        <Launch $w={72} aria-label="Task view"><TaskView /></Launch>
        <Launch $w={76} aria-label="Internet Explorer"><IeIcon /></Launch>
        <Launch $w={66} aria-label="File Explorer"><Explorer /></Launch>
        <Launch $w={72} aria-label="Chrome"><Chrome /></Launch>
        <Gap $w={6} />
        <Task $end={6}><SapTask logon />SAP Logon 8...</Task>
        <Task $active $end={6}><SapTask />S4A(1)/100 ...</Task>
        <Task><SapTask />S4A(3)/100 ...</Task>
        <Task><SapTask />S4A(4)/100 S...</Task>
        <Task><SapTask />S4A(5)/100 S...</Task>
        <Task><SapTask />S4A(6)/100 ...</Task>
        <Tray>
          <Launch $w={34} aria-label="Hidden icons"><Up /></Launch>
          <Launch $w={38} aria-label="Network"><Net /></Launch>
          <Launch $w={36} aria-label="Sound"><Mute /></Launch>
          <Launch $w={44} aria-label="Pen"><Pen /></Launch>
          <TrayText $w={60}>ENG<br />IN</TrayText>
          <TrayText $w={98}>10:25 AM<br />10/8/2024</TrayText>
          <Launch $w={66} aria-label="Notifications"><Notif /></Launch>
          <Gap $w={14} />
          <DesktopEdge />
        </Tray>
      </Taskbar>

      <Session>
        <svg width="150" height="42" viewBox="0 0 150 42" aria-hidden="true">
          <defs>
            <linearGradient id="rdp" x1="0" y1="0" x2="0" y2="1"><stop offset="0" stopColor="#5a86e0" /><stop offset="0.200" stopColor="#3a5fb4" /><stop offset="1" stopColor="#1f3877" /></linearGradient>
          </defs>
          <path d="M3 2L6 39h90c16 0 18-6 28-18l20-20z" fill="#000" opacity="0.200" />
          <path d="M4 0v34q0 3 3 3h86c16 0 18-6 28-18L143 0z" fill="#000" />
          <path d="M5 0v34h88c14 0 18-5 27-16L139 0z" fill="url(#rdp)" />
        </svg>
        <SessionButtons>
          <SessionButton aria-label="Minimize"><Svg w={14} h={14}><path d="M0 11h14v3H0z" fill="#8fb3ff" /></Svg></SessionButton>
          <SessionButton aria-label="Restore"><Svg w={16} h={16}><path d="M5 1h10v9M1 6h9v9H1z" fill="none" stroke="#8fb3ff" strokeWidth="2" /></Svg></SessionButton>
          <SessionButton aria-label="Close"><Svg w={14} h={14}><path d="M2 2l10 10M12 2L2 12" stroke="#8fb3ff" strokeWidth="3.500" /></Svg></SessionButton>
        </SessionButtons>
      </Session>
    </Window>
  );
}
